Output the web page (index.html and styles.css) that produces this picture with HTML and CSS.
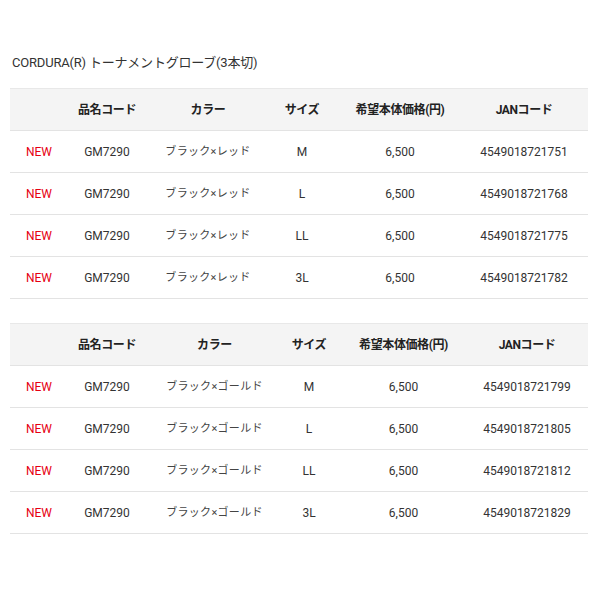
FILE: index.html
```html
<!DOCTYPE html>
<html lang="ja">
<head>
<meta charset="utf-8">
<link rel="stylesheet" href="styles.css">
</head>
<body>
<div class="page">
  <p class="title">CORDURA(R) トーナメントグローブ(3本切)</p>
  <table class="spec spec-red">
    <colgroup><col class="c1"><col class="c2"><col class="c3"><col class="c4"><col class="c5"><col class="c6"></colgroup>
    <thead>
      <tr><th></th><th>品名コード</th><th>カラー</th><th>サイズ</th><th>希望本体価格(円)</th><th class="jan">JANコード</th></tr>
    </thead>
    <tbody>
      <tr><td class="new">NEW</td><td>GM7290</td><td class="jp">ブラック×レッド</td><td>M</td><td>6,500</td><td class="jan">4549018721751</td></tr>
      <tr><td class="new">NEW</td><td>GM7290</td><td class="jp">ブラック×レッド</td><td>L</td><td>6,500</td><td class="jan">4549018721768</td></tr>
      <tr><td class="new">NEW</td><td>GM7290</td><td class="jp">ブラック×レッド</td><td>LL</td><td>6,500</td><td class="jan">4549018721775</td></tr>
      <tr><td class="new">NEW</td><td>GM7290</td><td class="jp">ブラック×レッド</td><td>3L</td><td>6,500</td><td class="jan">4549018721782</td></tr>
    </tbody>
  </table>
  <table class="spec spec-gold">
    <colgroup><col class="c1"><col class="c2"><col class="c3"><col class="c4"><col class="c5"><col class="c6"></colgroup>
    <thead>
      <tr><th></th><th>品名コード</th><th>カラー</th><th>サイズ</th><th>希望本体価格(円)</th><th class="jan">JANコード</th></tr>
    </thead>
    <tbody>
      <tr><td class="new">NEW</td><td>GM7290</td><td class="jp">ブラック×ゴールド</td><td>M</td><td>6,500</td><td class="jan">4549018721799</td></tr>
      <tr><td class="new">NEW</td><td>GM7290</td><td class="jp">ブラック×ゴールド</td><td>L</td><td>6,500</td><td class="jan">4549018721805</td></tr>
      <tr><td class="new">NEW</td><td>GM7290</td><td class="jp">ブラック×ゴールド</td><td>LL</td><td>6,500</td><td class="jan">4549018721812</td></tr>
      <tr><td class="new">NEW</td><td>GM7290</td><td class="jp">ブラック×ゴールド</td><td>3L</td><td>6,500</td><td class="jan">4549018721829</td></tr>
    </tbody>
  </table>
</div>
</body>
</html>
```

FILE: styles.css
```css
html, body {
  margin: 0;
  padding: 0;
  background: #fff;
}
.page {
  padding: 53px 12px 0 10px;
  font-family: Roboto, "Noto Sans CJK JP", sans-serif;
  font-size: 13px;
  color: #333;
}
.title {
  margin: 0 0 15px 2px;
  line-height: 20px;
  letter-spacing: -0.2px;
}
.spec {
  width: 578px;
  table-layout: fixed;
  border-collapse: collapse;
  margin-bottom: 24px;
}
.spec .c1 { width: 56px; }
.spec .c2 { width: 82px; }
.spec-red .c3 { width: 120px; }
.spec-red .c4 { width: 68px; }
.spec-red .c5 { width: 128px; }
.spec-red .c6 { width: 124px; }
.spec-gold .c3 { width: 133px; }
.spec-gold .c4 { width: 56px; }
.spec-gold .c5 { width: 133px; }
.spec-gold .c6 { width: 118px; }
.spec th,
.spec td {
  height: 41px;
  padding: 0 4px;
  text-align: center;
  border-bottom: 1px solid #e3e3e3;
  line-height: 16px;
  font-size: 12px;
  white-space: nowrap;
}
.spec th {
  background: #f4f4f4;
  font-weight: bold;
  border-top: 1px solid #e8e8e8;
  color: #222;
  letter-spacing: -0.4px;
}
.spec .jan {
  padding-left: 2px;
  padding-right: 6px;
}
.spec td.new {
  color: #e60012;
  padding-left: 5px;
  padding-right: 3px;
}
.spec td.jp {
  font-size: 11px;
  letter-spacing: 0.3px;
  color: #444;
}
```
